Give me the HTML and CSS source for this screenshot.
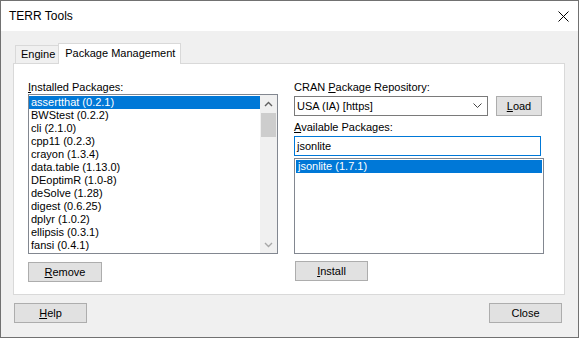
FILE: index.html
```html
<!DOCTYPE html>
<html lang="en">
<head>
    <meta charset="UTF-8">
    <title>TERR Tools</title>
    <link rel="stylesheet" href="styles.css">
</head>
<body>
    <div class="window">
        <div class="titlebar">
            <span class="title">TERR Tools</span>
            <svg class="close-x" width="11" height="11" viewBox="0 0 11 11">
                <path d="M0.5 0.5 L10.5 10.5 M10.5 0.5 L0.5 10.5" stroke="#000" stroke-width="1" fill="none"/>
            </svg>
        </div>

        <div class="client">
            <div class="tabs">
                <div class="tab">Engine</div>
                <div class="tab tab-active">Package Management</div>
            </div>

            <div class="panel">
                <div class="col">
                    <div class="label"><u>I</u>nstalled Packages:</div>
                    <div class="listbox listbox-installed">
                        <div class="rows">
                            <div class="row row-selected">assertthat (0.2.1)</div>
                            <div class="row">BWStest (0.2.2)</div>
                            <div class="row">cli (2.1.0)</div>
                            <div class="row">cpp11 (0.2.3)</div>
                            <div class="row">crayon (1.3.4)</div>
                            <div class="row">data.table (1.13.0)</div>
                            <div class="row">DEoptimR (1.0-8)</div>
                            <div class="row">deSolve (1.28)</div>
                            <div class="row">digest (0.6.25)</div>
                            <div class="row">dplyr (1.0.2)</div>
                            <div class="row">ellipsis (0.3.1)</div>
                            <div class="row">fansi (0.4.1)</div>
                        </div>
                        <div class="scrollbar">
                            <div class="scroll-btn">
                                <svg width="9" height="6" viewBox="0 0 9 6">
                                    <path d="M1 5 L4.5 1.5 L8 5" stroke="#606060" stroke-width="1.4" fill="none"/>
                                </svg>
                            </div>
                            <div class="scroll-track">
                                <div class="scroll-thumb"></div>
                            </div>
                            <div class="scroll-btn">
                                <svg width="9" height="6" viewBox="0 0 9 6">
                                    <path d="M1 1 L4.5 4.5 L8 1" stroke="#a8a8a8" stroke-width="1.4" fill="none"/>
                                </svg>
                            </div>
                        </div>
                    </div>
                    <button class="btn btn-remove"><u>R</u>emove</button>
                </div>

                <div class="col">
                    <div class="label">CRAN <u>P</u>ackage Repository:</div>
                    <div class="repo-row">
                        <div class="combo">
                            <span>USA (IA) [https]</span>
                            <svg width="9" height="6" viewBox="0 0 9 6">
                                <path d="M0.5 0.5 L4.5 4.5 L8.5 0.5" stroke="#444" stroke-width="1" fill="none"/>
                            </svg>
                        </div>
                        <button class="btn btn-load"><u>L</u>oad</button>
                    </div>
                    <div class="label label-avail"><u>A</u>vailable Packages:</div>
                    <div class="search">jsonlite</div>
                    <div class="listbox listbox-avail">
                        <div class="rows">
                            <div class="row row-selected">jsonlite (1.7.1)</div>
                        </div>
                    </div>
                    <button class="btn btn-install"><u>I</u>nstall</button>
                </div>
            </div>

            <div class="footer-buttons">
                <button class="btn"><u>H</u>elp</button>
                <button class="btn">Close</button>
            </div>
        </div>
    </div>
</body>
</html>
```

FILE: styles.css
```css
html, body {
    margin: 0;
    padding: 0;
}

body {
    font-family: "Liberation Sans", Arial, sans-serif;
    font-size: 11px;
    color: #000000;
    background-color: #ffffff;
}

u {
    text-decoration: underline;
    text-underline-offset: 1px;
}

.window {
    width: 579px;
    height: 338px;
    box-sizing: border-box;
    border: 1px solid #717171;
    display: flex;
    flex-direction: column;
}

.titlebar {
    height: 30px;
    display: flex;
    align-items: center;
    justify-content: space-between;
    padding: 0 9px 0 8px;
    background-color: #ffffff;
}

    .titlebar .title {
        font-size: 12px;
    }

.client {
    flex: 1;
    background-color: #f0f0f0;
    padding: 12px 13px 0 12px;
}

.tabs {
    height: 20px;
    display: flex;
    align-items: flex-end;
    padding-left: 2px;
}

.tab {
    height: 18px;
    box-sizing: border-box;
    padding: 0 3px 0 5px;
    line-height: 17px;
    border: 1px solid #d9d9d9;
    border-bottom: none;
    border-right: none;
    background-color: #f0f0f0;
}

.tab-active {
    height: 21px;
    margin-bottom: -1px;
    padding: 0 5px 0 6px;
    line-height: 19px;
    border-right: 1px solid #d9d9d9;
    background-color: #ffffff;
    position: relative;
    z-index: 1;
}

.panel {
    height: 232px;
    box-sizing: border-box;
    border: 1px solid #d9d9d9;
    background-color: #ffffff;
    display: flex;
    gap: 16px;
    padding: 16px 0 0 14px;
}

.col {
    width: 250px;
    display: flex;
    flex-direction: column;
    align-items: flex-start;
}

.label {
    height: 14px;
    line-height: 14px;
}

.label-avail {
    margin-top: 4px;
}

.listbox {
    width: 250px;
    box-sizing: border-box;
    border: 1px solid #828790;
    background-color: #ffffff;
    display: flex;
}

.listbox-installed {
    height: 160px;
}

.listbox-avail {
    height: 96px;
    margin-top: 2px;
}

.rows {
    flex: 1;
    padding: 1px 0;
}

.listbox-avail .rows {
    padding: 1px 1px;
}

.row {
    height: 13px;
    line-height: 13px;
    padding-left: 2px;
    white-space: nowrap;
}

.row-selected {
    background-color: #0078d7;
    color: #ffffff;
}

.scrollbar {
    width: 17px;
    display: flex;
    flex-direction: column;
    background-color: #f0f0f0;
}

.scroll-btn {
    height: 17px;
    display: flex;
    align-items: center;
    justify-content: center;
}

.scroll-track {
    flex: 1;
    padding: 1px 1px 0 1px;
}

.scroll-thumb {
    height: 24px;
    background-color: #cdcdcd;
}

.btn {
    height: 20px;
    width: 73px;
    box-sizing: border-box;
    padding: 0;
    border: 1px solid #adadad;
    background-color: #e1e1e1;
    font-family: "Liberation Sans", Arial, sans-serif;
    font-size: 11px;
    color: #000000;
    text-align: center;
}

.btn-remove {
    width: 74px;
    margin-top: 8px;
}

.btn-install {
    margin-top: 7px;
    margin-left: 1px;
}

.repo-row {
    display: flex;
    margin-top: 2px;
}

.combo {
    width: 194px;
    height: 20px;
    box-sizing: border-box;
    border: 1px solid #7a7a7a;
    background-color: #ffffff;
    display: flex;
    align-items: center;
    justify-content: space-between;
    padding: 0 5px 0 2px;
}

.btn-load {
    width: 46px;
    margin-left: 8px;
}

.search {
    width: 247px;
    height: 20px;
    box-sizing: border-box;
    margin-top: 2px;
    border: 1px solid #0078d7;
    line-height: 18px;
    padding-left: 2px;
    background-color: #ffffff;
}

.footer-buttons {
    display: flex;
    justify-content: space-between;
    margin: 8px 3px 0 1px;
}
```
